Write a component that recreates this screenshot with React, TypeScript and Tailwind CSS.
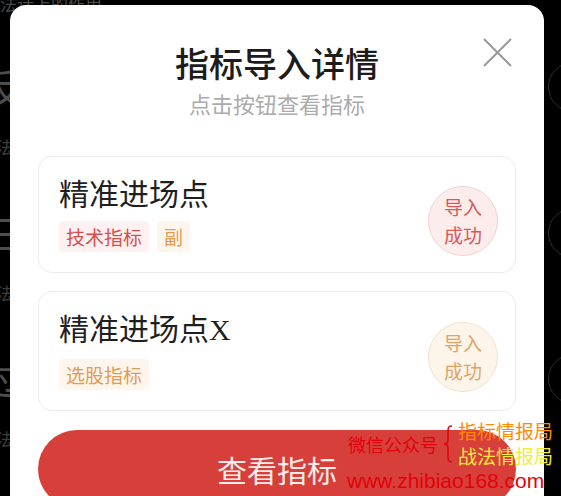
import React from 'react';

type Item = {
  name: string;
  suffix?: string;
  tags: { label: string; tone: 'red' | 'orange' }[];
  tone: 'red' | 'orange';
};

const items: Item[] = [
  {
    name: '精准进场点',
    tags: [
      { label: '技术指标', tone: 'red' },
      { label: '副', tone: 'orange' },
    ],
    tone: 'red',
  },
  {
    name: '精准进场点',
    suffix: 'X',
    tags: [{ label: '选股指标', tone: 'orange' }],
    tone: 'orange',
  },
];

const tagTone = {
  red: 'bg-[#fdf1f1] text-[#d84f4c]',
  orange: 'bg-[#fef6ed] text-[#e29b55]',
};

const badgeTone = {
  red: 'bg-[#fcecec] border-[#f2d2d2] text-[#d8595a]',
  orange: 'bg-[#fdf4ea] border-[#f3e2cf] text-[#e0a468]',
};

const sideChars = ['反', '三', '过'];

const App = () => {
  return (
    <div className="relative w-[561px] h-[496px] overflow-hidden bg-black font-['Noto_Sans_CJK_SC',sans-serif]">
      {/* dim page behind the sheet */}
      <div className="absolute left-0 top-[-9px] text-[17px] text-[#4a4a4a] whitespace-nowrap">法计上的作用</div>
      <div className="absolute left-[-16px] top-[66px] flex flex-col">
        {sideChars.map((c) => (
          <div key={c} className="h-[146px]">
            <div className="text-[40px] leading-[40px] text-[#4d4d4d]">{c}</div>
            <div className="mt-[32px] ml-[12px] text-[17px] leading-[17px] text-[#3c3c3c]">法</div>
          </div>
        ))}
      </div>
      <div className="absolute left-[548px] top-[62px] flex flex-col gap-[96px]">
        {[0, 1, 2].map((n) => (
          <div key={n} className="w-[50px] h-[50px] rounded-full border border-[#2e2e2e]" />
        ))}
      </div>

      {/* sheet */}
      <div className="relative ml-[10px] mt-[5px] w-[534px] h-[530px] rounded-t-[16px] bg-white px-[28px]">
        <button className="absolute right-[32px] top-[33px] w-[29px] h-[29px]">
          <svg viewBox="0 0 29 29" width="29" height="29" fill="none" stroke="#9a9a9a" strokeWidth="2">
            <path d="M1 1L28 28M28 1L1 28" />
          </svg>
        </button>

        <div className="pt-[41px] text-center">
          <h2 className="text-[34px] leading-[34px] font-medium text-[#1c1c1c]">指标导入详情</h2>
          <p className="mt-[12px] text-[22px] leading-[22px] text-[#ababab]">点击按钮查看指标</p>
        </div>

        <div className="mt-[42px] flex flex-col gap-[18px]">
          {items.map((item, i) => (
            <div
              key={i}
              className="flex items-center justify-between rounded-[14px] border border-[#ececec] pl-[20px] pr-[17px] pt-[20px] pb-[20px]"
            >
              <div>
                <div className="text-[30px] leading-[30px] text-[#1f1f1f]">
                  {item.name}
                  {item.suffix && <span className="font-['Liberation_Serif',serif]">{item.suffix}</span>}
                </div>
                <div className="mt-[14px] flex gap-[8px]">
                  {item.tags.map((t) => (
                    <span
                      key={t.label}
                      className={`h-[31px] px-[7px] rounded-[4px] text-[19px] leading-[31px] ${tagTone[t.tone]}`}
                    >
                      {t.label}
                    </span>
                  ))}
                </div>
              </div>
              <div
                className={`translate-y-[6px] w-[70px] h-[70px] rounded-full border flex flex-col items-center justify-center text-[19px] leading-[28px] ${badgeTone[item.tone]}`}
              >
                <span>导入</span>
                <span>成功</span>
              </div>
            </div>
          ))}
        </div>

        <button className="mt-[19px] w-full h-[78px] rounded-full bg-[#d7403a] text-[30px] text-[#fcecea]">
          查看指标
        </button>
      </div>

      {/* watermark */}
      <div className="absolute left-[347px] top-[420px] flex flex-col">
        <div className="flex items-center">
          <span className="ml-[1px] text-[18px] leading-[20px] text-[#e3000b]">微信公众号</span>
          <svg className="ml-[4px]" width="12" height="38" viewBox="0 0 12 38" fill="none" stroke="#e3000b" strokeWidth="1.5">
            <path d="M10 1C6 1 6 3 6 7V15C6 18 5 19 2 19C5 19 6 20 6 23V31C6 35 6 37 10 37" />
          </svg>
          <div className="ml-[4px] flex flex-col gap-[3px] text-[19px] leading-[22px]">
            <span className="text-[#ff8a00]">指标情报局</span>
            <span className="text-[#efec3a]">战法情报局</span>
          </div>
        </div>
        <span className="mt-[2px] text-[21px] leading-[24px] text-[#e3000b] font-['Liberation_Sans',sans-serif]">
          www.zhibiao168.com
        </span>
      </div>
    </div>
  );
};

export default App;
